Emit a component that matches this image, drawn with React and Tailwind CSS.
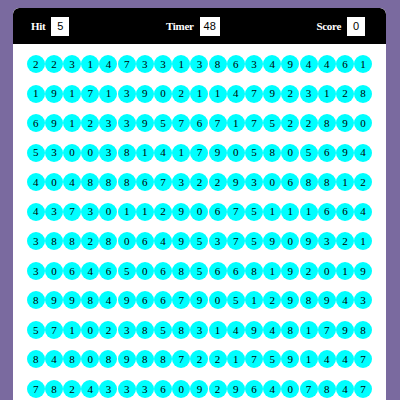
import React from 'react';

const rows = [
  '2231473313863494461',
  '1917139021147923128',
  '6912339576717522890',
  '5300381417905805694',
  '4048886732293068812',
  '4373011290675111664',
  '3882806495375909321',
  '3064650685668192019',
  '8998496679051298943',
  '5710238583149481798',
  '8480898872217591447',
  '7824333609296407847',
];

function Stat({ label, value }) {
  return (
    <div className="flex items-center gap-[6px]">
      <span className="text-white font-bold text-[11px] tracking-[-0.3px] font-['Liberation_Serif',serif]">{label}</span>
      <div className="bg-white text-black h-[19px] min-w-[18px] px-[4px] flex items-center justify-center text-[11px] font-['Liberation_Sans',sans-serif]">
        {value}
      </div>
    </div>
  );
}

export default function App() {
  return (
    <div className="w-[400px] h-[400px] overflow-hidden bg-[#7a6a9f] pt-[8px] pl-[13px] pr-[14px]">
      <div className="bg-white rounded-t-[6px] h-[400px] overflow-hidden">
        <div className="bg-black h-[36px] flex items-center justify-between pl-[18px] pr-[21px] rounded-t-[6px]">
          <Stat label="Hit" value="5" />
          <Stat label="Timer" value="48" />
          <Stat label="Score" value="0" />
        </div>
        <div className="pt-[11px] pl-[13.7px] flex flex-col gap-y-[11.55px]">
          {rows.map((r, i) => (
            <div key={i} className="grid grid-cols-[repeat(19,18.2px)]">
              {r.split('').map((d, j) => (
                <div
                  key={j}
                  className="w-[18px] h-[18px] rounded-full bg-[#00ffff] flex items-center justify-center text-[11px] text-black font-['Liberation_Serif',serif]"
                >
                  {d}
                </div>
              ))}
            </div>
          ))}
        </div>
      </div>
    </div>
  );
}
